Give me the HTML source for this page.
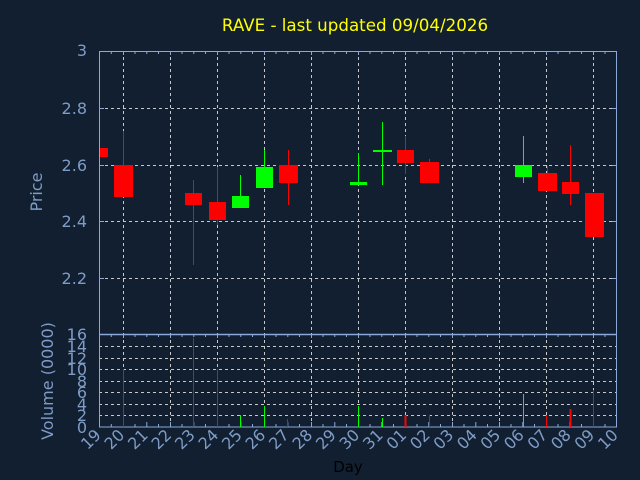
<!DOCTYPE html>
<html><head><meta charset="utf-8"><style>
html,body{margin:0;padding:0;background:#111f30;}
svg{display:block;}
text{font-family:"DejaVu Sans","Liberation Sans",sans-serif;}
</style></head><body>
<svg width="640" height="480" viewBox="0 0 640 480" xmlns="http://www.w3.org/2000/svg">
<rect width="640" height="480" fill="#111f30"/>
<text x="355" y="31" fill="#ffff00" font-size="16.7" text-anchor="middle">RAVE - last updated 09/04/2026</text>
<g stroke="#c8c8c8" stroke-width="1" stroke-dasharray="3,3" fill="none">
<path d="M123.5 51V334M170.5 51V334M217.5 51V334M264.5 51V334M311.5 51V334M358.5 51V334M405.5 51V334M452.5 51V334M499.5 51V334M546.5 51V334M593.5 51V334"/>
<path d="M99 108.5H617M99 165.5H617M99 221.5H617M99 278.5H617"/>
<path d="M123.5 334V427M170.5 334V427M217.5 334V427M264.5 334V427M311.5 334V427M358.5 334V427M405.5 334V427M452.5 334V427M499.5 334V427M546.5 334V427M593.5 334V427"/>
<path d="M99 346.5H617M99 358.5H617M99 369.5H617M99 381.5H617M99 392.5H617M99 404.5H617M99 415.5H617"/>
</g>
<g stroke="#8aa8d8" stroke-width="1">
<path d="M111.3 51v3M123.5 51v4M135 51v3M146.8 51v3M158.5 51v3M170.5 51v4M182 51v3M193.8 51v3M205.5 51v3M217.5 51v4M229 51v3M240.8 51v3M252.5 51v3M264.5 51v4M276 51v3M287.8 51v3M299.5 51v3M311.5 51v4M323 51v3M334.8 51v3M346.5 51v3M358.5 51v4M370 51v3M381.8 51v3M393.5 51v3M405.5 51v4M417 51v3M428.8 51v3M440.5 51v3M452.5 51v4M464 51v3M475.8 51v3M487.5 51v3M499.5 51v4M511 51v3M522.8 51v3M534.5 51v3M546.5 51v4M558 51v3M569.8 51v3M581.5 51v3M593.5 51v4M605 51v3"/>
<path d="M111.3 334v3M123.5 334v4M135 334v3M146.8 334v3M158.5 334v3M170.5 334v4M182 334v3M193.8 334v3M205.5 334v3M217.5 334v4M229 334v3M240.8 334v3M252.5 334v3M264.5 334v4M276 334v3M287.8 334v3M299.5 334v3M311.5 334v4M323 334v3M334.8 334v3M346.5 334v3M358.5 334v4M370 334v3M381.8 334v3M393.5 334v3M405.5 334v4M417 334v3M428.8 334v3M440.5 334v3M452.5 334v4M464 334v3M475.8 334v3M487.5 334v3M499.5 334v4M511 334v3M522.8 334v3M534.5 334v3M546.5 334v4M558 334v3M569.8 334v3M581.5 334v3M593.5 334v4M605 334v3"/>
<path d="M111.3 427v-3M123.5 427v-5M135 427v-3M146.8 427v-5M158.5 427v-3M170.5 427v-5M182 427v-3M193.8 427v-5M205.5 427v-3M217.5 427v-5M229 427v-3M240.8 427v-5M252.5 427v-3M264.5 427v-5M276 427v-3M287.8 427v-5M299.5 427v-3M311.5 427v-5M323 427v-3M334.8 427v-5M346.5 427v-3M358.5 427v-5M370 427v-3M381.8 427v-5M393.5 427v-3M405.5 427v-5M417 427v-3M428.8 427v-5M440.5 427v-3M452.5 427v-5M464 427v-3M475.8 427v-5M487.5 427v-3M499.5 427v-5M511 427v-3M522.8 427v-5M534.5 427v-3M546.5 427v-5M558 427v-3M569.8 427v-5M581.5 427v-3M593.5 427v-5M605 427v-3"/>
<path d="M99 108.5h5M99 165.5h5M99 221.5h5M99 278.5h5M617 108.5h-5M617 165.5h-5M617 221.5h-5M617 278.5h-5"/>
</g>
<rect x="99.5" y="51.5" width="517" height="375.5" fill="none" stroke="#8aa8d8" stroke-width="1"/>
<line x1="99" y1="334.5" x2="617" y2="334.5" stroke="#8aa8d8" stroke-width="1.5"/>
<g stroke-width="1">
<rect x="100" y="148" width="8" height="9" fill="#ff0000"/>
<line x1="123.5" y1="131" x2="123.5" y2="165" stroke="#ff0000"/><rect x="114" y="165" width="19" height="32" fill="#ff0000"/>
<line x1="193.5" y1="180" x2="193.5" y2="265" stroke="#ff0000"/><rect x="185" y="193" width="17" height="12" fill="#ff0000"/>
<line x1="217.5" y1="167" x2="217.5" y2="225" stroke="#ff0000"/><rect x="209" y="202" width="17" height="18" fill="#ff0000"/>
<line x1="240.5" y1="175" x2="240.5" y2="196" stroke="#00ff00"/><rect x="232" y="196" width="17" height="12" fill="#00ff00"/>
<line x1="264.5" y1="150" x2="264.5" y2="167" stroke="#00ff00"/><rect x="256" y="167" width="17" height="21" fill="#00ff00"/>
<line x1="288.5" y1="150" x2="288.5" y2="205" stroke="#ff0000"/><rect x="279" y="165" width="19" height="18" fill="#ff0000"/>
<line x1="358.5" y1="153" x2="358.5" y2="185" stroke="#00ff00"/><rect x="350" y="182" width="17" height="3" fill="#00ff00"/>
<line x1="382.5" y1="122" x2="382.5" y2="185" stroke="#00ff00"/><rect x="373" y="150" width="19" height="2" fill="#00ff00"/>
<line x1="405.5" y1="136" x2="405.5" y2="174" stroke="#ff0000"/><rect x="397" y="150" width="17" height="13" fill="#ff0000"/>
<line x1="429.5" y1="159" x2="429.5" y2="165" stroke="#ff0000"/><rect x="420" y="162" width="19" height="21" fill="#ff0000"/>
<line x1="523.5" y1="136" x2="523.5" y2="183" stroke="#00ff00"/><rect x="515" y="165" width="17" height="12" fill="#00ff00"/>
<line x1="547.5" y1="166" x2="547.5" y2="175" stroke="#ff0000"/><rect x="538" y="173" width="19" height="18" fill="#ff0000"/>
<line x1="570.5" y1="145" x2="570.5" y2="205" stroke="#ff0000"/><rect x="562" y="182" width="17" height="12" fill="#ff0000"/>
<rect x="585" y="193" width="19" height="44" fill="#ff0000"/>
</g>
<g stroke-width="1">
<line x1="123.5" y1="369" x2="123.5" y2="427" stroke="#ff0000"/>
<line x1="193.5" y1="338" x2="193.5" y2="427" stroke="#ff0000"/>
<line x1="217.5" y1="369" x2="217.5" y2="427" stroke="#ff0000"/>
<line x1="240.5" y1="415" x2="240.5" y2="427" stroke="#00ff00"/>
<line x1="264.5" y1="406" x2="264.5" y2="427" stroke="#00ff00"/>
<line x1="287.5" y1="419" x2="287.5" y2="427" stroke="#ff0000"/>
<line x1="358.5" y1="406" x2="358.5" y2="427" stroke="#00ff00"/>
<line x1="382.5" y1="418" x2="382.5" y2="427" stroke="#00ff00"/>
<line x1="405.5" y1="415" x2="405.5" y2="427" stroke="#ff0000" stroke-width="2"/>
<line x1="429.5" y1="415" x2="429.5" y2="427" stroke="#ff0000"/>
<line x1="523.5" y1="394" x2="523.5" y2="427" stroke="#00ff00"/>
<line x1="546.5" y1="415" x2="546.5" y2="427" stroke="#ff0000"/>
<line x1="570.5" y1="409" x2="570.5" y2="427" stroke="#ff0000" stroke-width="2"/>
<line x1="593.5" y1="390" x2="593.5" y2="427" stroke="#ff0000"/>
</g>
<g fill="#7e9cc6" font-size="16" text-anchor="end">
<text x="87" y="56">3</text>
<text x="87" y="114">2.8</text>
<text x="87" y="171">2.6</text>
<text x="87" y="227">2.4</text>
<text x="87" y="284">2.2</text>
<text x="87" y="340">16</text>
<text x="87" y="352">14</text>
<text x="87" y="364">12</text>
<text x="87" y="375">10</text>
<text x="87" y="387">8</text>
<text x="87" y="398">6</text>
<text x="87" y="410">4</text>
<text x="87" y="421">2</text>
<text x="87" y="433">0</text>
</g>
<g fill="#7e9cc6" font-size="16" text-anchor="middle">
<text transform="translate(42,192) rotate(-90)">Price</text>
<text transform="translate(53,381) rotate(-90)">Volume (0000)</text>
</g>
<g fill="#7e9cc6" font-size="16" text-anchor="end">
<text transform="translate(102,436) rotate(-45)">19</text>
<text transform="translate(125.5,436) rotate(-45)">20</text>
<text transform="translate(149,436) rotate(-45)">21</text>
<text transform="translate(172.5,436) rotate(-45)">22</text>
<text transform="translate(196,436) rotate(-45)">23</text>
<text transform="translate(219.5,436) rotate(-45)">24</text>
<text transform="translate(243,436) rotate(-45)">25</text>
<text transform="translate(266.5,436) rotate(-45)">26</text>
<text transform="translate(290,436) rotate(-45)">27</text>
<text transform="translate(313.5,436) rotate(-45)">28</text>
<text transform="translate(337,436) rotate(-45)">29</text>
<text transform="translate(360.5,436) rotate(-45)">30</text>
<text transform="translate(384,436) rotate(-45)">31</text>
<text transform="translate(407.5,436) rotate(-45)">01</text>
<text transform="translate(431,436) rotate(-45)">02</text>
<text transform="translate(454.5,436) rotate(-45)">03</text>
<text transform="translate(478,436) rotate(-45)">04</text>
<text transform="translate(501.5,436) rotate(-45)">05</text>
<text transform="translate(525,436) rotate(-45)">06</text>
<text transform="translate(548.5,436) rotate(-45)">07</text>
<text transform="translate(572,436) rotate(-45)">08</text>
<text transform="translate(595.5,436) rotate(-45)">09</text>
<text transform="translate(619,436) rotate(-45)">10</text>
</g>
<text x="348" y="472" fill="#000000" font-size="15" text-anchor="middle">Day</text>
</svg>
</body></html>
